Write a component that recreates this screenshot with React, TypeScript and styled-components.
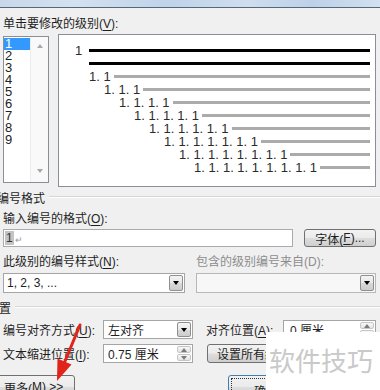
import styled, { createGlobalStyle } from "styled-components"

const GlobalStyle = createGlobalStyle`
    html, body {
        margin: 0;
        padding: 0;
        background: #f0f0f0;
    }
    body {
        font-family: "Liberation Sans", "Noto Sans CJK SC", sans-serif;
    }
`

const LEVELS = [1, 2, 3, 4, 5, 6, 7, 8, 9]

type PreviewRowData = {
    indent: number
    label?: string
    tab?: number
    bold?: boolean
}

const previewRows: PreviewRowData[] = [
    { indent: 16, label: "1", tab: 14, bold: true },
    { indent: 30, bold: true },
    ...[2, 3, 4, 5, 6, 7, 8, 9].map((n) => ({
        indent: 30 + 15 * (n - 2),
        label: Array(n).fill("1").join(". "),
    })),
]

export default function App() {
    return (
        <Window>
            <GlobalStyle />
            <TitleStrip />
            <Body>
                <FieldLabel $top={8}>
                    单击要修改的级别(<u>V</u>):
                </FieldLabel>
                <TopRow>
                    <LevelList>
                        <LevelItems>
                            {LEVELS.map((n) => (
                                <LevelItem key={n} $selected={n === 1}>
                                    {n}
                                </LevelItem>
                            ))}
                        </LevelItems>
                        <ListScroll>
                            <Triangle $dir="up" $color="#a8a8a8" />
                            <Triangle $dir="down" $color="#a8a8a8" />
                        </ListScroll>
                    </LevelList>
                    <Preview>
                        {previewRows.map((row, i) => (
                            <PreviewRow key={i} $indent={row.indent}>
                                {row.label && (
                                    <PreviewNum $tab={row.tab}>
                                        {row.label}
                                    </PreviewNum>
                                )}
                                <PreviewBar $bold={row.bold} />
                            </PreviewRow>
                        ))}
                    </Preview>
                </TopRow>

                <GroupHeader $shift={-6} $top={2}>
                    <span>编号格式</span>
                </GroupHeader>
                <FieldLabel $top={6}>
                    输入编号的格式(<u>O</u>):
                </FieldLabel>
                <FormatRow>
                    <FormatInput>
                        <Highlight>1</Highlight>
                        <ReturnMark>↵</ReturnMark>
                    </FormatInput>
                    <PushButton $width={72} $height={18}>
                        字体(<u>F</u>)...
                    </PushButton>
                </FormatRow>

                <TwoCol $top={7}>
                    <FieldLabel>
                        此级别的编号样式(<u>N</u>):
                    </FieldLabel>
                    <FieldLabel $muted>包含的级别编号来自(D):</FieldLabel>
                </TwoCol>
                <TwoCol $top={3}>
                    <Select>
                        <SelectText>1, 2, 3, ...</SelectText>
                        <DropButton>
                            <Triangle $dir="down" $color="#000" />
                        </DropButton>
                    </Select>
                    <Select $disabled>
                        <SelectText />
                        <DropButton>
                            <Triangle $dir="down" $color="#000" />
                        </DropButton>
                    </Select>
                </TwoCol>

                <GroupHeader $shift={-16} $top={6}>
                    <span>位置</span>
                </GroupHeader>
                <FieldRow $top={5}>
                    <RowLabel>
                        编号对齐方式(<u>U</u>):
                    </RowLabel>
                    <Select $width={90} $height={19}>
                        <SelectText $pad={4}>左对齐</SelectText>
                        <DropButton>
                            <Triangle $dir="down" $color="#000" />
                        </DropButton>
                    </Select>
                    <SideLabel $left={13} $width={77}>
                        对齐位置(<u>A</u>):
                    </SideLabel>
                    <Spinner $width={93}>
                        <SelectText $pad={6}>0 厘米</SelectText>
                        <SpinArrows>
                            <SpinHalf>
                                <Triangle $dir="up" $color="#7a7a7a" />
                            </SpinHalf>
                            <SpinHalf>
                                <Triangle $dir="down" $color="#7a7a7a" />
                            </SpinHalf>
                        </SpinArrows>
                    </Spinner>
                </FieldRow>
                <FieldRow $top={5}>
                    <RowLabel>
                        文本缩进位置(<u>I</u>):
                    </RowLabel>
                    <Spinner $width={90}>
                        <SelectText $pad={4}>0.75 厘米</SelectText>
                        <SpinArrows>
                            <SpinHalf>
                                <Triangle $dir="up" $color="#7a7a7a" />
                            </SpinHalf>
                            <SpinHalf>
                                <Triangle $dir="down" $color="#7a7a7a" />
                            </SpinHalf>
                        </SpinArrows>
                    </Spinner>
                    <PushButton $width={150} $height={19} $left={14} $align="left">
                        设置所有级别(<u>E</u>)...
                    </PushButton>
                </FieldRow>

                <BottomRow>
                    <PushButton $width={81} $height={24} $left={-9} $align="left">
                        更多(<u>M</u>) &gt;&gt;
                    </PushButton>
                    <PushButton $width={76} $height={24} $left={153} $default>
                        <FocusRing>确定</FocusRing>
                    </PushButton>
                </BottomRow>
            </Body>

            <Watermark>软件技巧</Watermark>

            <ArrowLayer viewBox="0 0 380 390" width="380" height="390">
                <line
                    x1="80"
                    y1="325"
                    x2="63"
                    y2="366"
                    stroke="#e0241c"
                    strokeWidth="3"
                    strokeLinecap="round"
                />
                <polygon points="57,381 57.5,358.5 71.5,364.5" fill="#e0241c" />
            </ArrowLayer>
        </Window>
    )
}

const Window = styled.div`
    position: relative;
    width: 380px;
    height: 390px;
    overflow: hidden;
    background: #f0f0f0;
    color: #1e1e1e;
    font-size: 12px;

    u {
        text-decoration: underline;
        text-underline-offset: 2px;
    }
`

const TitleStrip = styled.div`
    height: 7px;
    border-bottom: 1px solid #56677a;
    background: linear-gradient(
        90deg,
        #c8d8ea 0%,
        #d3e1f0 20%,
        #bfd3e9 45%,
        #cfdeef 65%,
        #bcd1e8 82%,
        #d2e0f0 100%
    );
`

const Body = styled.div`
    display: flex;
    flex-direction: column;
    padding: 0 4px 0 3px;
`

const FieldLabel = styled.div<{ $top?: number; $muted?: boolean }>`
    margin-top: ${(p) => p.$top ?? 0}px;
    height: 16px;
    line-height: 16px;
    font-size: 12px;
    white-space: nowrap;
    color: ${(p) => (p.$muted ? "#8d8d8d" : "#1e1e1e")};
`

const TopRow = styled.div`
    display: flex;
    align-items: flex-start;
    margin-top: 2px;
`

const LevelList = styled.div`
    display: flex;
    width: 46px;
    height: 147px;
    margin-top: 2px;
    box-sizing: border-box;
    border: 1px solid #8a8e96;
    background: #fff;
`

const LevelItems = styled.div`
    flex: 1;
    display: flex;
    flex-direction: column;
    padding-top: 1px;
`

const LevelItem = styled.div<{ $selected?: boolean }>`
    height: 12px;
    line-height: 12px;
    font-size: 13px;
    padding-left: 1px;
    color: ${(p) => (p.$selected ? "#fff" : "#222")};
    background: ${(p) => (p.$selected ? "#3399ff" : "transparent")};
`

const ListScroll = styled.div`
    width: 17px;
    display: flex;
    flex-direction: column;
    align-items: center;
    justify-content: space-between;
    padding: 7px 0 9px;
    background: #f9f9f9;
    border-left: 1px solid #ececec;
`

const Triangle = styled.span<{ $dir: "up" | "down"; $color: string }>`
    display: block;
    width: 0;
    height: 0;
    border-left: 3.5px solid transparent;
    border-right: 3.5px solid transparent;
    ${(p) =>
        p.$dir === "up"
            ? `border-bottom: 4px solid ${p.$color};`
            : `border-top: 4px solid ${p.$color};`}
`

const Preview = styled.div`
    width: 318px;
    height: 153px;
    margin-left: 9px;
    box-sizing: border-box;
    border: 1px solid #8a8e96;
    background: #fff;
    padding: 9px 5px 0 0;
`

const PreviewRow = styled.div<{ $indent: number }>`
    display: flex;
    align-items: center;
    height: 13px;
    padding-left: ${(p) => p.$indent}px;
`

const PreviewNum = styled.span<{ $tab?: number }>`
    font-family: "Liberation Sans", sans-serif;
    font-size: 13px;
    line-height: 13px;
    color: #2b2b2b;
    white-space: pre;
    margin-right: 3px;
    ${(p) => (p.$tab ? `width: ${p.$tab}px; margin-right: 0;` : "")}
`

const PreviewBar = styled.span<{ $bold?: boolean }>`
    flex: 1;
    height: 3px;
    background: ${(p) => (p.$bold ? "#000" : "#ababab")};
`

const GroupHeader = styled.div<{ $shift: number; $top: number }>`
    display: flex;
    align-items: center;
    gap: 4px;
    height: 16px;
    margin: ${(p) => p.$top}px -4px 0 ${(p) => p.$shift}px;
    font-size: 12px;
    white-space: nowrap;

    &::after {
        content: "";
        flex: 1;
        height: 0;
        border-top: 1px solid #d5d5d5;
        border-bottom: 1px solid #fff;
    }
`

const FormatRow = styled.div`
    display: flex;
    align-items: center;
    gap: 11px;
    margin-top: 2px;
`

const FormatInput = styled.div`
    display: flex;
    align-items: center;
    width: 290px;
    height: 18px;
    box-sizing: border-box;
    border: 1px solid #a9abb2;
    background: #fff;
    padding-left: 1px;
`

const Highlight = styled.span`
    display: inline-block;
    height: 14px;
    line-height: 15px;
    padding: 0 1px;
    font-size: 12px;
    background: #c4c4c4;
    color: #333;
`

const ReturnMark = styled.span`
    font-size: 9px;
    color: #9a9a9a;
    margin-left: 1px;
    margin-top: 3px;
`

const PushButton = styled.div<{
    $width: number
    $height: number
    $left?: number
    $align?: "left" | "center"
    $default?: boolean
}>`
    flex: none;
    display: flex;
    align-items: center;
    justify-content: ${(p) => (p.$align === "left" ? "flex-start" : "center")};
    width: ${(p) => p.$width}px;
    height: ${(p) => p.$height}px;
    margin-left: ${(p) => p.$left ?? 0}px;
    box-sizing: border-box;
    padding: ${(p) => (p.$align === "left" ? "0 0 0 9px" : "0")};
    border: 1px solid ${(p) => (p.$default ? "#3c7fb1" : "#707070")};
    border-radius: 3px;
    background: linear-gradient(#f2f2f2 0%, #ebebeb 48%, #dddddd 52%, #cfcfcf 100%);
    font-size: 12px;
    white-space: nowrap;
`

const FocusRing = styled.span`
    display: flex;
    align-items: center;
    justify-content: center;
    align-self: stretch;
    flex: 1;
    margin: 2px;
    border: 1px dotted #333;
    padding-top: 6px;
`

const TwoCol = styled.div<{ $top: number }>`
    display: grid;
    grid-template-columns: 182px 180px;
    column-gap: 11px;
    margin-top: ${(p) => p.$top}px;
`

const Select = styled.div<{ $disabled?: boolean; $width?: number; $height?: number }>`
    display: flex;
    align-items: stretch;
    ${(p) => (p.$width ? `width: ${p.$width}px;` : "")}
    height: ${(p) => p.$height ?? 20}px;
    box-sizing: border-box;
    border: 1px solid ${(p) => (p.$disabled ? "#b8b8b8" : "#a5a5a5")};
    background: ${(p) => (p.$disabled ? "#f7f7f7" : "#fff")};
`

const SelectText = styled.span<{ $pad?: number }>`
    flex: 1;
    display: flex;
    align-items: center;
    padding-left: ${(p) => p.$pad ?? 3}px;
    font-size: 12px;
    white-space: nowrap;
    overflow: hidden;
`

const DropButton = styled.span`
    width: 14px;
    margin: 1px;
    box-sizing: border-box;
    display: flex;
    align-items: center;
    justify-content: center;
    border: 1px solid #8e8f8f;
    border-radius: 2px;
    background: linear-gradient(#f4f4f4 0%, #e8e8e8 50%, #d9d9d9 51%, #cdcdcd 100%);
`

const FieldRow = styled.div<{ $top: number }>`
    display: flex;
    align-items: center;
    margin-top: ${(p) => p.$top}px;
`

const RowLabel = styled.div`
    width: 100px;
    font-size: 12px;
    white-space: nowrap;
`

const SideLabel = styled.div<{ $left: number; $width: number }>`
    width: ${(p) => p.$width}px;
    margin-left: ${(p) => p.$left}px;
    font-size: 12px;
    white-space: nowrap;
`

const Spinner = styled.div<{ $width: number }>`
    display: flex;
    align-items: stretch;
    width: ${(p) => p.$width}px;
    height: 19px;
    box-sizing: border-box;
    border: 1px solid #a5a5a5;
    background: #fff;
`

const SpinArrows = styled.span`
    width: 14px;
    display: flex;
    flex-direction: column;
    margin: 1px;
    gap: 1px;
`

const SpinHalf = styled.span`
    flex: 1;
    display: flex;
    align-items: center;
    justify-content: center;
    border: 1px solid #c6c6c6;
    border-radius: 2px;
    background: linear-gradient(#f7f7f7, #e4e4e4);
`

const BottomRow = styled.div`
    display: flex;
    align-items: flex-start;
    margin-top: 12px;
`

const Watermark = styled.div`
    position: absolute;
    left: 266px;
    top: 332px;
    width: 114px;
    height: 58px;
    box-sizing: border-box;
    padding: 14px 0 0 3px;
    background: #fff;
    color: #c9c9c9;
    font-family: "Noto Sans CJK SC", sans-serif;
    font-size: 26px;
    line-height: 28px;
    white-space: nowrap;
`

const ArrowLayer = styled.svg`
    position: absolute;
    left: 0;
    top: 0;
    pointer-events: none;
`
